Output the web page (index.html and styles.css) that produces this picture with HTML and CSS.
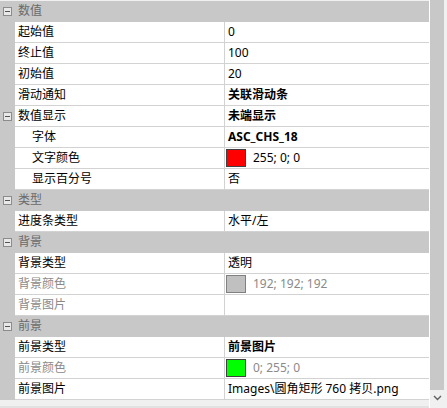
FILE: index.html
```html
<!DOCTYPE html>
<html>
<head>
<meta charset="utf-8">
<link rel="stylesheet" href="styles.css">
</head>
<body>
<div class="panel">
  <div class="grid">
    <div class="cat"><div class="gut"><span class="tog"></span></div><div class="cat-label">数值</div></div>
    <div class="row"><div class="gut"></div><div class="name">起始值</div><div class="val">0</div></div>
    <div class="row"><div class="gut"></div><div class="name">终止值</div><div class="val">100</div></div>
    <div class="row"><div class="gut"></div><div class="name">初始值</div><div class="val">20</div></div>
    <div class="row"><div class="gut"></div><div class="name">滑动通知</div><div class="val bold">关联滑动条</div></div>
    <div class="row"><div class="gut"><span class="tog"></span></div><div class="name">数值显示</div><div class="val bold">未端显示</div></div>
    <div class="row"><div class="gut"></div><div class="name sub">字体</div><div class="val bold">ASC_CHS_18</div></div>
    <div class="row"><div class="gut"></div><div class="name sub">文字颜色</div><div class="val"><span class="sw red"></span><span>255; 0; 0</span></div></div>
    <div class="row"><div class="gut"></div><div class="name sub">显示百分号</div><div class="val">否</div></div>
    <div class="cat"><div class="gut"><span class="tog"></span></div><div class="cat-label">类型</div></div>
    <div class="row"><div class="gut"></div><div class="name">进度条类型</div><div class="val">水平/左</div></div>
    <div class="cat"><div class="gut"><span class="tog"></span></div><div class="cat-label">背景</div></div>
    <div class="row"><div class="gut"></div><div class="name">背景类型</div><div class="val">透明</div></div>
    <div class="row dis"><div class="gut"></div><div class="name">背景颜色</div><div class="val"><span class="sw gray"></span><span>192; 192; 192</span></div></div>
    <div class="row dis"><div class="gut"></div><div class="name">背景图片</div><div class="val"></div></div>
    <div class="cat"><div class="gut"><span class="tog"></span></div><div class="cat-label">前景</div></div>
    <div class="row"><div class="gut"></div><div class="name">前景类型</div><div class="val bold">前景图片</div></div>
    <div class="row dis"><div class="gut"></div><div class="name">前景颜色</div><div class="val"><span class="sw green"></span><span>0; 255; 0</span></div></div>
    <div class="row"><div class="gut"></div><div class="name">前景图片</div><div class="val">Images\圆角矩形 760 拷贝.png</div></div>
  </div>
  <div class="scroll">
    <div class="thumb"></div>
    <div class="arrow">
      <svg width="9" height="6" viewBox="0 0 9 6"><path d="M1 1 L4.5 4.5 L8 1" fill="none" stroke="#606060" stroke-width="1.4"/></svg>
    </div>
  </div>
</div>
</body>
</html>
```
FILE: styles.css
```css
html, body {
  margin: 0;
  padding: 0;
  background: #ffffff;
}
.panel {
  width: 447px;
  height: 408px;
  display: flex;
  overflow: hidden;
  font-family: "Noto Sans", "Noto Sans CJK SC", sans-serif;
  font-size: 12px;
  color: #000;
}
.grid {
  width: 429px;
  padding-top: 1px;
  background: #f0f0f0;
  display: flex;
  flex-direction: column;
  border-bottom: 2px solid #e2e2e2;
  box-sizing: border-box;
  height: 408px;
}
.row {
  display: grid;
  grid-template-columns: 15px 209px 1fr;
  height: 21px;
  background: #fff;
}
.gut {
  background: #c8c8c8;
  position: relative;
}
.name {
  border-bottom: 1px solid #d2d2d2;
  padding-left: 3px;
  line-height: 20px;
  white-space: nowrap;
}
.name.sub {
  padding-left: 17px;
}
.val {
  border-bottom: 1px solid #d2d2d2;
  border-left: 1px solid #d2d2d2;
  padding-left: 3px;
  line-height: 20px;
  white-space: nowrap;
  display: flex;
  align-items: center;
}
.bold {
  font-weight: bold;
}
.dis .name, .dis .val {
  color: #8a8a8a;
}
.cat {
  display: flex;
  height: 21px;
  background: #c8c8c8;
}
.cat .gut {
  width: 15px;
  flex: none;
}
.cat-label {
  padding-left: 3px;
  line-height: 20px;
  color: #6a6a6a;
}
.tog {
  position: absolute;
  left: 3px;
  top: 6px;
  width: 9px;
  height: 9px;
  box-sizing: border-box;
  border: 1px solid #8c8c8c;
  background: #e8e8e8;
}
.tog::after {
  content: "";
  position: absolute;
  left: 1px;
  top: 3px;
  width: 5px;
  height: 1px;
  background: #555;
}
.sw {
  display: inline-block;
  width: 20px;
  height: 18px;
  box-sizing: border-box;
  border: 1px solid #404040;
  margin-left: -2px;
  margin-right: 7px;
}
.sw.red { background: #ff0000; }
.sw.gray { background: #c0c0c0; border-color: #808080; }
.sw.green { background: #00ff00; }
.scroll {
  width: 18px;
  height: 408px;
  display: flex;
  flex-direction: column;
  border-left: 1px solid #fff;
  border-right: 3px solid #f0f0f0;
  box-sizing: border-box;
  background: #f0f0f0;
}
.thumb {
  height: 390px;
  background: #c8c8c8;
}
.arrow {
  height: 15px;
  display: flex;
  align-items: center;
  justify-content: center;
  background: #f0f0f0;
}
```
